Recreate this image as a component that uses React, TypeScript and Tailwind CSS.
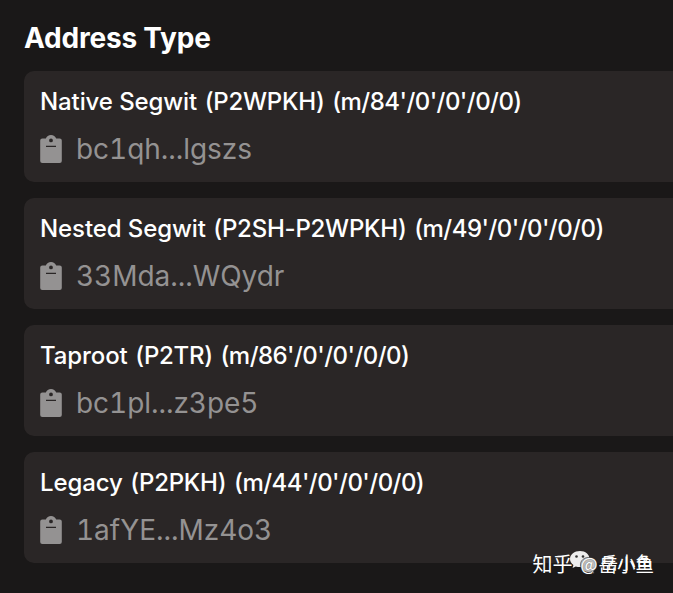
import React from 'react';

const addresses = [
  { name: 'Native Segwit', script: '(P2WPKH)', path: "(m/84'/0'/0'/0/0)", address: 'bc1qh...lgszs' },
  { name: 'Nested Segwit', script: '(P2SH-P2WPKH)', path: "(m/49'/0'/0'/0/0)", address: '33Mda...WQydr' },
  { name: 'Taproot', script: '(P2TR)', path: "(m/86'/0'/0'/0/0)", address: 'bc1pl...z3pe5' },
  { name: 'Legacy', script: '(P2PKH)', path: "(m/44'/0'/0'/0/0)", address: '1afYE...Mz4o3' },
];

function ClipboardIcon() {
  return (
    <svg className="h-7 w-6 shrink-0 text-[#949292]" viewBox="0 0 24 28" fill="currentColor" fillRule="evenodd">
      <path d="M2.300 3.400H5.800C6.800 1.400 8.500 0 11 0s4.200 1.400 5.200 3.400h3.500A2.100 2.100 0 0 1 21.800 5.500v20.400A2.100 2.100 0 0 1 19.700 28H2.300A2.100 2.100 0 0 1 .2 25.900V5.500A2.100 2.100 0 0 1 2.300 3.400ZM11 3.500a1.900 1.900 0 1 0 0 3.800 1.900 1.900 0 0 0 0-3.800ZM6 10.700V12h10v-1.300Z" />
    </svg>
  );
}

function Watermark() {
  return (
    <div className="absolute bottom-[13px] right-[19px] flex items-center whitespace-nowrap font-['Noto_Sans_CJK_SC',sans-serif] text-[20px] leading-8 text-white">
      <span>知乎</span>
      <span className="relative ml-[8px] mr-[1px] text-[18px]">
        <svg className="absolute -left-[10px] top-[2px] h-6 w-7" viewBox="0 0 28 24">
          <path fill="#ededed" d="M10 1C4.500 1 0 4.500 0 9c0 2.500 1.300 4.400 3.400 6L2.600 18l3.200-1.600c1.300.5 2.700.7 4.200.7 5.500 0 9.500-3.600 9.500-8.100S15.500 1 10 1Z" />
          <path fill="#d2d2d2" stroke="#4b4949" strokeWidth=".7" d="M18.500 7.500c-4.600 0-8 3-8 7.300s3.400 7.600 8 7.600c1.100 0 2.100-.2 3-.5l2.500 1.400-.6-2.400c1.700-1.300 3-3.400 3-6.100C26.400 10.500 23.100 7.500 18.500 7.500Z" />
          <circle cx="6.500" cy="6.500" r="1.300" fill="#333" />
          <circle cx="13" cy="6.500" r="1.300" fill="#333" />
        </svg>
        <span className="relative -top-px [text-shadow:0_0_2px_#333]">@</span>
      </span>
      <span className="relative text-[18.500px]">
        岳小鱼
        <span className="absolute -top-[2px] left-[2px] text-[17.500px]">岳小鱼</span>
      </span>
    </div>
  );
}

export default function App() {
  return (
    <div className="relative h-[593px] w-[673px] overflow-hidden bg-[#1a1818] pl-6 pt-5 font-['Inter',sans-serif] text-white">
      <h1 className="h-[51px] text-[28px] font-bold leading-9 tracking-[-0.2px]">Address Type</h1>
      <div className="flex flex-col gap-4">
        {addresses.map(({ name, script, path, address }) => (
          <div key={name} className="h-[111px] rounded-l-[10px] bg-[#2a2626] pl-4 pt-[13px]">
            <div className="flex gap-[7.500px] whitespace-nowrap text-[24px] font-medium leading-9">
              <span className="tracking-[-0.1px]">{name}</span>
              <span className="tracking-[-0.25px]">{script}</span>
              <span className="tracking-[-0.55px]">{path}</span>
            </div>
            <div className="mt-[11px] flex items-center gap-3">
              <ClipboardIcon />
              <span className="text-[28px] leading-9 tracking-[-0.05px] text-[#949292] tabular-nums">{address}</span>
            </div>
          </div>
        ))}
      </div>
      <Watermark />
    </div>
  );
}
